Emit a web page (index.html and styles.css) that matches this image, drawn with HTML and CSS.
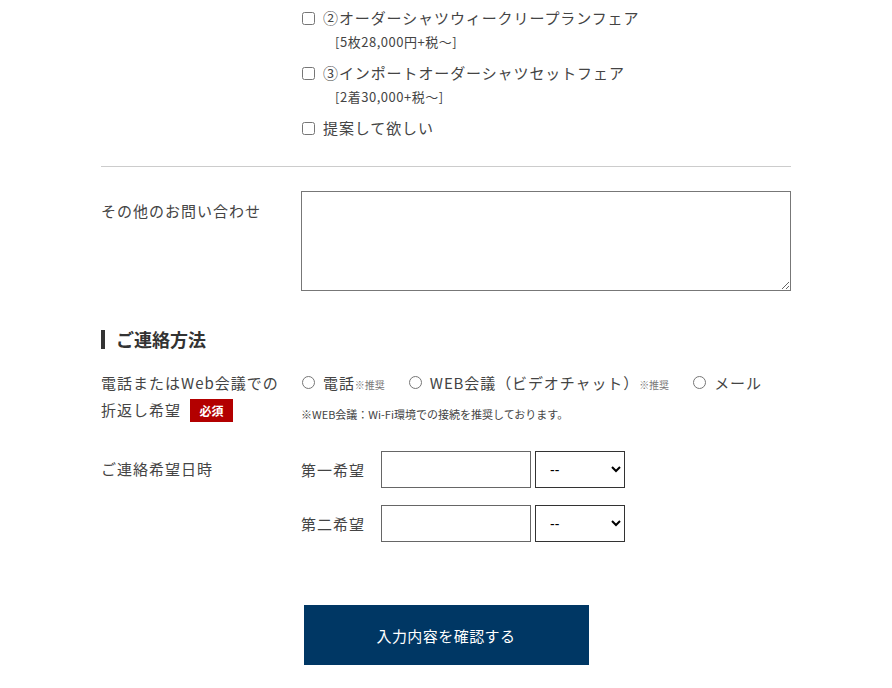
FILE: index.html
```html
<!DOCTYPE html>
<html lang="ja">
<head>
<meta charset="utf-8">
<link rel="stylesheet" href="styles.css">
</head>
<body>
<div class="wrap">
  <div class="row plans">
    <div class="label"></div>
    <div class="field">
      <label class="check"><input type="checkbox"><span>②オーダーシャツウィークリープランフェア</span></label>
      <div class="sub">[5枚28,000円+税～]</div>
      <label class="check"><input type="checkbox"><span>③インポートオーダーシャツセットフェア</span></label>
      <div class="sub">[2着30,000+税～]</div>
      <label class="check"><input type="checkbox"><span>提案して欲しい</span></label>
    </div>
  </div>
  <hr class="divider">
  <div class="row other">
    <div class="label">その他のお問い合わせ</div>
    <div class="field"><textarea class="area"></textarea></div>
  </div>

  <h2 class="heading">ご連絡方法</h2>

  <div class="row method">
    <div class="label">電話またはWeb会議での<br>折返し希望<span class="req">必須</span></div>
    <div class="field">
      <div class="radios">
        <label class="radio"><input type="radio" name="m"><span>電話</span><small>※推奨</small></label>
        <label class="radio"><input type="radio" name="m"><span>WEB会議（ビデオチャット）</span><small>※推奨</small></label>
        <label class="radio"><input type="radio" name="m"><span>メール</span></label>
      </div>
      <p class="note">※WEB会議：Wi-Fi環境での接続を推奨しております。</p>
    </div>
  </div>

  <div class="row dates">
    <div class="label">ご連絡希望日時</div>
    <div class="field">
      <div class="date">
        <span class="dlabel">第一希望</span>
        <input type="text" class="dinput">
        <select class="dsel"><option>--</option></select>
      </div>
      <div class="date">
        <span class="dlabel">第二希望</span>
        <input type="text" class="dinput">
        <select class="dsel"><option>--</option></select>
      </div>
    </div>
  </div>

  <div class="submit"><button class="btn" type="button">入力内容を確認する</button></div>
</div>
</body>
</html>
```
FILE: styles.css
```css
html, body {
  margin: 0;
  padding: 0;
  background: #fff;
}
body {
  font-family: "Noto Sans CJK JP", "Noto Sans", sans-serif;
  color: #444;
  font-size: 15px;
}
.wrap {
  width: 690px;
  margin: 0 auto;
  padding-top: 6px;
}
.row {
  display: grid;
  grid-template-columns: 200px 490px;
}
.label {
  letter-spacing: 1px;
  line-height: 27px;
}
.check {
  display: flex;
  align-items: center;
  height: 24px;
  line-height: 24px;
  letter-spacing: 0.06em;
  font-size: 15px;
}
.check input {
  margin: 0 8px 0 1px;
  width: 13px;
  height: 13px;
}
.sub {
  font-size: 13px;
  letter-spacing: 0.04em;
  line-height: 20px;
  padding-left: 34px;
  margin-top: 2px;
  margin-bottom: 9px;
}
.divider {
  border: 0;
  border-top: 1px solid #ccc;
  margin: 26px 0 24px;
}
.other .label {
  padding-top: 6px;
}
.area {
  display: block;
  width: 490px;
  height: 100px;
  box-sizing: border-box;
  border: 1px solid #777;
  margin: 0;
  resize: vertical;
}
.heading {
  display: flex;
  align-items: center;
  gap: 11px;
  margin: 34px 0 16px;
  font-size: 18px;
  line-height: 28px;
  font-weight: bold;
  color: #333;
}
.heading::before {
  content: "";
  width: 4px;
  height: 19px;
  background: #333;
}
.req {
  display: inline-block;
  vertical-align: middle;
  margin-left: 9px;
  width: 43px;
  height: 23px;
  line-height: 23px;
  text-align: center;
  background: #b30000;
  color: #fff;
  font-size: 12px;
  font-weight: bold;
  letter-spacing: 0;
  position: relative;
  top: -1px;
}
.radios {
  display: flex;
  gap: 23px;
  height: 27px;
  align-items: center;
}
.radio {
  display: flex;
  align-items: center;
  letter-spacing: 0.06em;
}
.radio input {
  margin: 0 8px 0 1px;
  width: 13px;
  height: 13px;
}
.radio small {
  font-size: 10px;
  color: #777;
  letter-spacing: 0;
  margin-top: 4px;
}
.note {
  margin: 10px 0 0;
  font-size: 11px;
  color: #444;
}
.dates {
  margin-top: 28px;
}
.dates .label {
  padding-top: 4px;
}
.date {
  display: flex;
  align-items: center;
  margin-bottom: 17px;
}
.dlabel {
  width: 80px;
  letter-spacing: 1px;
}
.dinput {
  width: 150px;
  height: 37px;
  box-sizing: border-box;
  border: 1px solid #666;
  margin: 0;
}
.dsel {
  width: 90px;
  height: 37px;
  box-sizing: border-box;
  margin: 0 0 0 4px;
  border: 1px solid #333;
  background: #fff;
  font-size: 14px;
  padding-left: 10px;
  border-radius: 0;
}
.submit {
  display: flex;
  justify-content: center;
  padding-top: 46px;
  padding-bottom: 30px;
}
.btn {
  width: 285px;
  height: 60px;
  background: #003764;
  color: #fff;
  border: 0;
  font-family: inherit;
  font-size: 15px;
  letter-spacing: 0.03em;
  cursor: pointer;
}
```
